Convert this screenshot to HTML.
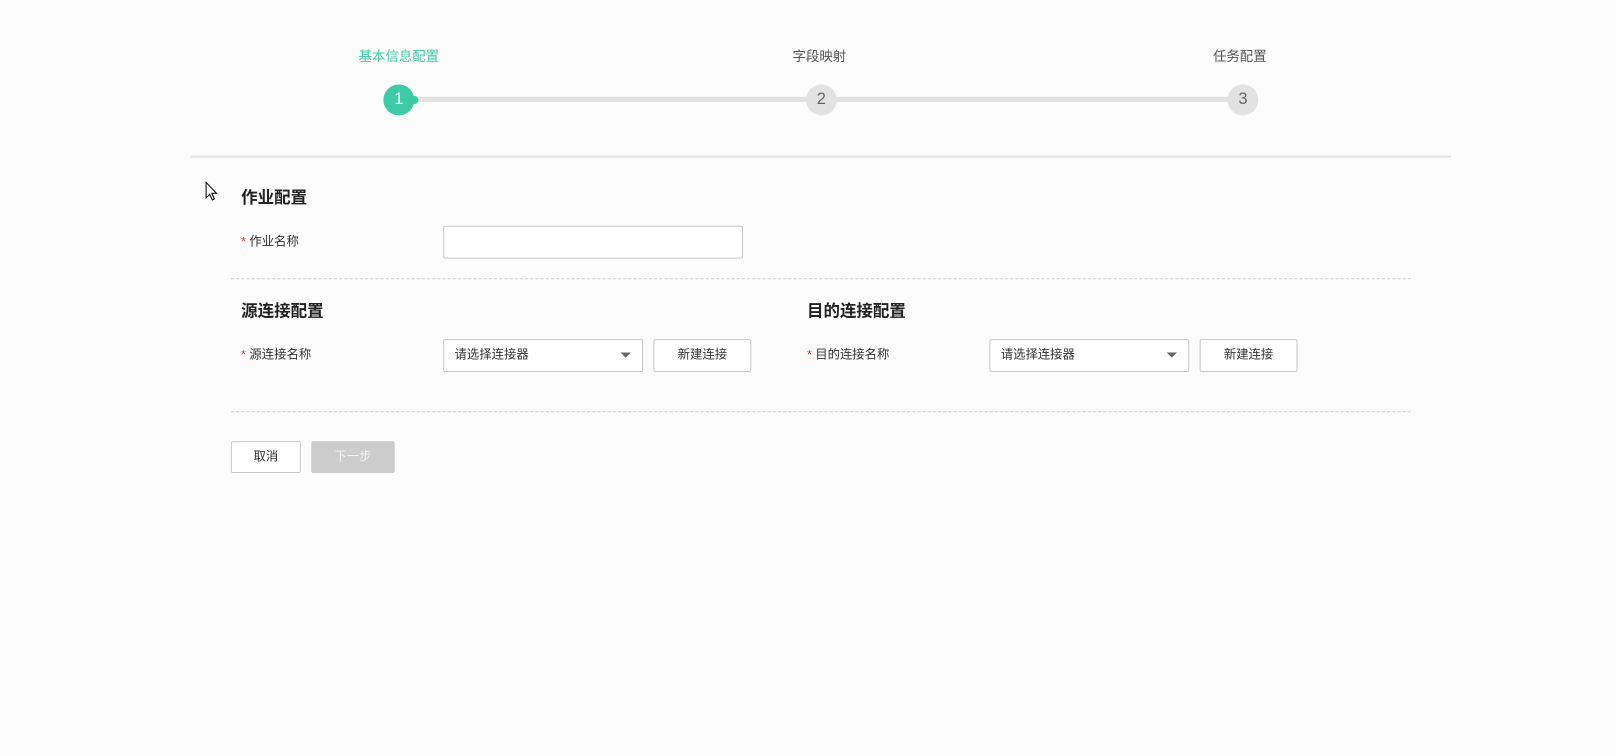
<!DOCTYPE html>
<html><head><meta charset="utf-8"><style>
body{margin:0;width:1616px;height:756px;background:#fcfcfc;font-family:"Liberation Sans","Noto Sans CJK SC",sans-serif;position:relative;overflow:hidden;color:#333}
#w{position:absolute;left:0;top:0;width:1568px;height:734px;transform:scale(1.0306);transform-origin:0 0}
.a{position:absolute}
.t{font-size:13px;color:#555;white-space:nowrap}
.h{font-size:16px;font-weight:bold;color:#222}
.lbl{font-size:12px;color:#333}
.lbl b{color:#e33;font-weight:normal}
.box{border:1px solid #c8c8c8;border-radius:2px;background:#fff;box-sizing:border-box}
.btn{border:1px solid #c8c8c8;border-radius:2px;background:#fff;box-sizing:border-box;font-size:12px;text-align:center;line-height:28px;color:#333}
.circ{width:30px;height:30px;border-radius:50%;text-align:center;line-height:30px;font-size:16px}
.dash{border-top:1px dashed #ccc;height:0}
</style></head><body><div id="w">
<div class="a t" style="left:348px;top:44px;color:#3ec9a7">基本信息配置</div>
<div class="a t" style="left:769px;top:44px">字段映射</div>
<div class="a t" style="left:1177px;top:44px">任务配置</div>
<div class="a" style="left:395px;top:94px;width:815px;height:5px;background:#e2e2e2"></div>
<div class="a circ" style="left:372px;top:82px;background:#3ec9a7;color:#fff">1</div>
<div class="a" style="left:398px;top:93px;width:8px;height:8px;border-radius:50%;background:#3ec9a7"></div>
<div class="a circ" style="left:782px;top:82px;background:#e2e2e2;color:#666">2</div>
<div class="a circ" style="left:1191px;top:82px;background:#e2e2e2;color:#666">3</div>
<div class="a" style="left:185px;top:151px;width:1223px;height:2px;background:#e2e2e2"></div>
<svg class="a" style="left:199px;top:176px" width="12" height="20" viewBox="0 0 12 20"><path d="M1 1 L1 16 L4.5 12.5 L7 18 L9 17 L6.5 11.5 L11 11.5 Z" fill="#fff" stroke="#000" stroke-width="1"/></svg>
<div class="a h" style="left:234px;top:178px">作业配置</div>
<div class="a lbl" style="left:234px;top:225px"><b>*</b> 作业名称</div>
<div class="a box" style="left:430px;top:219px;width:291px;height:32px"></div>
<div class="a dash" style="left:224px;top:270px;width:1145px"></div>
<div class="a h" style="left:234px;top:288px">源连接配置</div>
<div class="a h" style="left:783px;top:288px">目的连接配置</div>
<div class="a lbl" style="left:234px;top:335px"><b>*</b> 源连接名称</div>
<div class="a box lbl" style="left:430px;top:329px;width:194px;height:32px;padding:0 10px;line-height:28px">请选择连接器</div>
<div class="a" style="left:602px;top:342px;border-left:5px solid transparent;border-right:5px solid transparent;border-top:5px solid #666"></div>
<div class="a btn" style="left:634px;top:329px;width:95px;height:32px">新建连接</div>
<div class="a lbl" style="left:783px;top:335px"><b>*</b> 目的连接名称</div>
<div class="a box lbl" style="left:960px;top:329px;width:194px;height:32px;padding:0 10px;line-height:28px">请选择连接器</div>
<div class="a" style="left:1132px;top:342px;border-left:5px solid transparent;border-right:5px solid transparent;border-top:5px solid #666"></div>
<div class="a btn" style="left:1164px;top:329px;width:95px;height:32px">新建连接</div>
<div class="a dash" style="left:224px;top:399px;width:1145px"></div>
<div class="a btn" style="left:224px;top:428px;width:68px;height:31px">取消</div>
<div class="a btn" style="left:302px;top:428px;width:81px;height:31px;background:#ccc;border-color:#ccc;color:#f4f4f4">下一步</div>
</div></body></html>
